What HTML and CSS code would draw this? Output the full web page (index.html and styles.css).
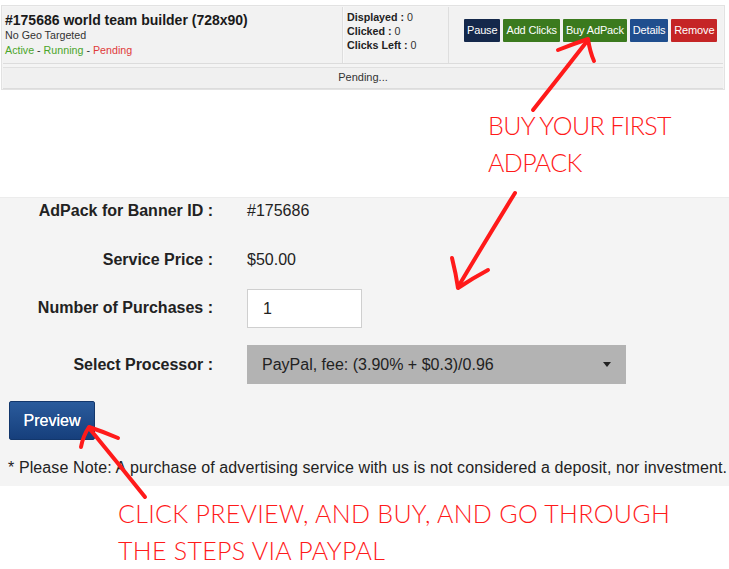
FILE: index.html
```html
<!DOCTYPE html>
<html>
<head>
<meta charset="utf-8">
<link rel="stylesheet" href="styles.css">
</head>
<body>
<div class="banner">
  <div class="banner-main">
    <div class="cell info">
      <div class="title">#175686 world team builder (728x90)</div>
      <div class="sub">No Geo Targeted</div>
      <div class="sub"><span class="green">Active</span> - <span class="green">Running</span> - <span class="red">Pending</span></div>
    </div>
    <div class="cell stats">
      <div><b>Displayed :</b> 0</div>
      <div><b>Clicked :</b> 0</div>
      <div><b>Clicks Left :</b> 0</div>
    </div>
    <div class="cell actions">
      <span class="btn btn-navy">Pause</span>
      <span class="btn btn-green">Add Clicks</span>
      <span class="btn btn-green">Buy AdPack</span>
      <span class="btn btn-blue">Details</span>
      <span class="btn btn-red">Remove</span>
    </div>
  </div>
  <div class="banner-status">Pending...</div>
</div>

<div class="note note-top">
  <div>BUY YOUR FIRST</div>
  <div>ADPACK</div>
</div>

<div class="panel">
  <div class="row row-id">
    <div class="label">AdPack for Banner ID :</div>
    <div class="value">#175686</div>
  </div>
  <div class="row row-price">
    <div class="label">Service Price :</div>
    <div class="value">$50.00</div>
  </div>
  <div class="row row-qty">
    <div class="label">Number of Purchases :</div>
    <div class="value"><div class="input">1</div></div>
  </div>
  <div class="row row-proc">
    <div class="label">Select Processor :</div>
    <div class="value">
      <div class="select"><span>PayPal, fee: (3.90% + $0.3)/0.96</span><span class="caret"></span></div>
    </div>
  </div>
  <div class="preview">Preview</div>
  <div class="disclaimer">* Please Note: A purchase of advertising service with us is not considered a deposit, nor investment.</div>
</div>

<div class="note note-bottom">
  <div>CLICK PREVIEW, AND BUY, AND GO THROUGH</div>
  <div>THE STEPS VIA PAYPAL</div>
</div>

<svg class="arrows" width="729" height="569" viewBox="0 0 729 569">
  <g fill="none" stroke="#ff1a1a" stroke-width="4" stroke-linecap="round" stroke-linejoin="round">
    <path d="M533 110 Q560 76 588 40"/>
    <path d="M558 50 Q573 44 588 39 Q590 52 594 61"/>
    <path d="M515 193 Q486 240 458 287"/>
    <path d="M452 258 Q456 274 458 288 Q473 278 488 270"/>
    <path d="M145 497 Q117 462 89 428"/>
    <path d="M81 447 Q83 436 89 427 Q104 432 118 438"/>
  </g>
</svg>
</body>
</html>
```
FILE: styles.css
```css
html, body {
  margin: 0;
  padding: 0;
  background: #ffffff;
}
body {
  position: relative;
  width: 729px;
  height: 569px;
  overflow: hidden;
  font-family: "Liberation Sans", Arial, sans-serif;
  color: #222;
}

/* top banner card */
.banner {
  margin: 5px 4px 0 1px;
  border: 1px solid #e2e2e2;
  background: #f4f4f4;
  padding: 1px 1px 0 1px;
}
.banner-main {
  display: flex;
  height: 56px;
  border-bottom: 1px solid #dcdcdc;
  background: #f2f2f2;
}
.cell {
  box-sizing: border-box;
}
.info {
  width: 340px;
  padding: 5px 0 0 2px;
  border-right: 1px solid #dedede;
}
.title {
  font-size: 14px;
  font-weight: bold;
  line-height: 16px;
  color: #1a1a1a;
}
.sub {
  font-size: 10.7px;
  line-height: 15px;
  color: #333;
}
.green { color: #4aa52a; }
.red { color: #e03a3a; }
.stats {
  width: 106px;
  padding: 3px 0 0 3px;
  font-size: 10.7px;
  line-height: 14px;
  color: #333;
  border-left: 1px solid #f8f8f8;
  border-right: 1px solid #dedede;
}
.stats b { color: #222; }
.actions {
  flex: 1;
  display: flex;
  align-items: flex-start;
  gap: 3px;
  padding: 12px 0 0 15px;
}
.btn {
  display: inline-block;
  height: 23px;
  line-height: 23px;
  padding: 0 3px;
  font-size: 11px;
  color: #fff;
  letter-spacing: -0.15px;
  border-radius: 1px;
}
.btn-navy { background: #14284b; }
.btn-green { background: #3b7a1e; }
.btn-blue { background: #1f4e8e; }
.btn-red { background: #c52526; }
.banner-status {
  margin-top: 3px;
  height: 20px;
  line-height: 19px;
  border-top: 1px solid #e0e0e0;
  border-bottom: 1px solid #dcdcdc;
  background: #f0f0f0;
  text-align: center;
  font-size: 11px;
  color: #333;
}

/* handwritten-style notes */
.note {
  color: #ff1a1a;
  font-family: "Lato", "Liberation Sans", sans-serif;
  font-weight: 300;
  font-size: 25px;
  line-height: 37px;
}
.note-top {
  margin-top: 17px;
  padding-left: 488px;
  height: 90px;
  letter-spacing: -0.6px;
}
.note-bottom {
  padding: 9px 0 0 118px;
  letter-spacing: 0.3px;
}

/* form panel */
.panel {
  background: #f4f4f4;
  border-top: 1px solid #ececec;
  padding: 0 0 8px 0;
}
.row {
  display: flex;
  align-items: center;
}
.label {
  width: 213px;
  text-align: right;
  font-weight: bold;
  font-size: 16px;
  color: #222;
}
.value {
  margin-left: 34px;
  font-size: 16px;
  color: #222;
}
.row-id { height: 26px; }
.row-price { height: 28px; margin-top: 22px; }
.row-qty { height: 38px; margin-top: 15px; }
.row-proc { height: 39px; margin-top: 18px; }
.input {
  box-sizing: border-box;
  width: 115px;
  height: 39px;
  line-height: 37px;
  padding-left: 15px;
  background: #fff;
  border: 1px solid #cfcfcf;
  font-size: 16px;
}
.select {
  box-sizing: border-box;
  width: 379px;
  height: 39px;
  display: flex;
  align-items: center;
  justify-content: space-between;
  padding: 0 15px 0 15px;
  background: #b3b3b3;
  font-size: 16px;
  color: #222;
}
.caret {
  width: 0;
  height: 0;
  border-left: 4px solid transparent;
  border-right: 4px solid transparent;
  border-top: 5px solid #222;
}
.preview {
  margin: 17px 0 0 9px;
  width: 86px;
  height: 39px;
  box-sizing: border-box;
  line-height: 37px;
  text-align: center;
  font-size: 16px;
  color: #fff;
  background: linear-gradient(#2a5b9c, #163f7c);
  border: 1px solid #13376c;
  border-radius: 2px;
  text-shadow: 0 0 0.5px #fff;
}
.disclaimer {
  margin: 18px 0 0 8px;
  font-size: 16px;
  line-height: 20px;
  letter-spacing: 0.11px;
  white-space: nowrap;
  color: #222;
}

.arrows {
  position: absolute;
  left: 0;
  top: 0;
  pointer-events: none;
}
```
